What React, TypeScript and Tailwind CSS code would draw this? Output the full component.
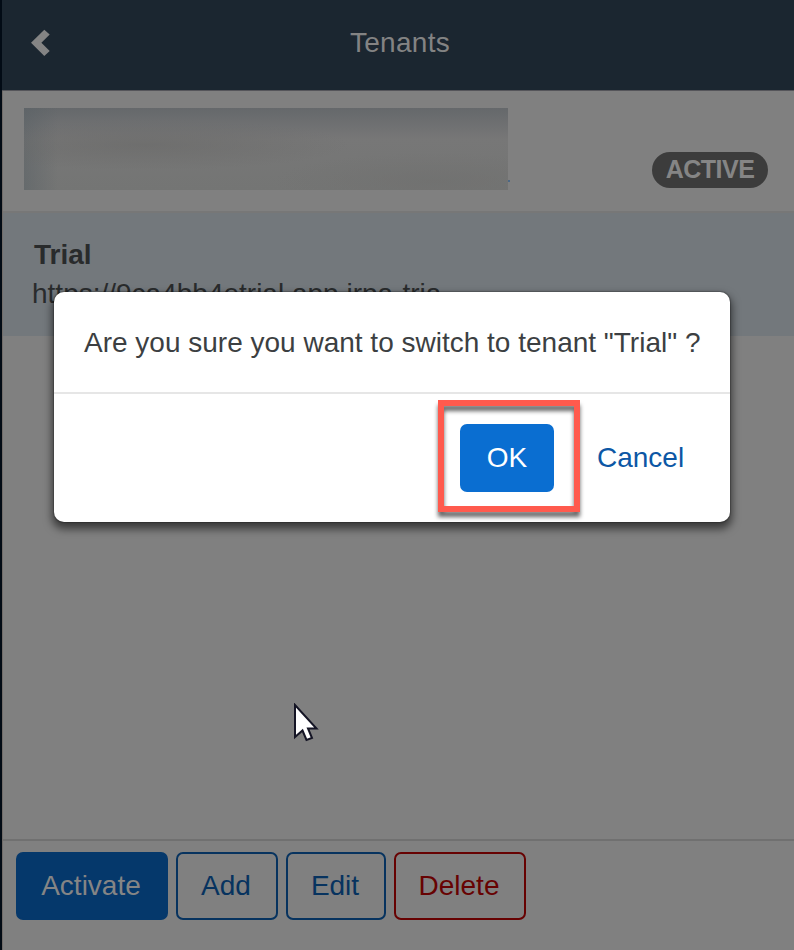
import type { ReactNode } from "react";

function ChevronLeft() {
  return (
    <svg className="ml-[28px] h-[28px] w-[22px]" viewBox="0 0 22 28">
      <path d="M14.3 0.8 L19.7 5.6 L11.4 13.8 L19.7 22 L14.3 27 L1 13.8 Z" fill="#848484" />
    </svg>
  );
}

function FooterButton({ className, children }: { className: string; children: ReactNode }) {
  return (
    <button
      className={`flex h-[68px] items-center justify-center rounded-[7px] border-2 pr-[2px] text-[28px] leading-8 ${className}`}
    >
      {children}
    </button>
  );
}

function ConfirmDialog() {
  return (
    <div className="absolute left-[52px] top-[292px] flex h-[230px] w-[676px] flex-col rounded-[10px] bg-white shadow-[0_0_1px_1px_rgba(0,0,0,0.2),0_5px_9px_2px_rgba(0,0,0,0.55)]">
      <div className="flex h-[102px] items-center whitespace-nowrap border-b-2 border-[#e6e6e6] pl-[30px] pt-[2px] text-[28px] leading-8 text-[#3c3f42]">
        Are you sure you want to switch to tenant "Trial" ?
      </div>
      <div className="flex justify-end pr-[46px] pt-[30px]">
        <button className="h-[68px] w-[94px] rounded-[7px] bg-[#0a6ed1] text-[28px] leading-8 text-white">OK</button>
        <button className="ml-[43px] h-[68px] w-[87px] text-[28px] leading-8 text-[#0c57a5]">Cancel</button>
      </div>
      <div className="absolute left-[384px] top-[108px] h-[112px] w-[142px] border-6 border-[#ff5a4d] drop-shadow-[0_5px_2px_rgba(0,0,0,0.6)]" />
    </div>
  );
}

export default function App() {
  return (
    <div className="relative flex h-[950px] w-[794px] flex-col overflow-hidden border-l-2 border-[#020b15] bg-[#808080] font-['Liberation_Sans',Arial,sans-serif]">
      <header className="grid h-[91px] shrink-0 grid-cols-[1fr_auto_1fr] items-center border-b border-[#55555a] bg-[#1b2630] pb-1">
        <ChevronLeft />
        <h1 className="pl-[4px] text-[28px] leading-8 tracking-[0.3px] text-[#838383]">Tenants</h1>
      </header>

      <section className="flex h-[122px] shrink-0 items-start justify-between border-b-2 border-[#777777] pl-[22px] pr-[26px] pt-[17px]">
        <div className="flex items-end">
          <div className="h-[82px] w-[484px] bg-[radial-gradient(ellipse_at_25%_45%,rgba(106,106,105,0.65),transparent_40%),radial-gradient(ellipse_at_85%_90%,rgba(112,112,111,0.7),transparent_28%),linear-gradient(to_right,rgba(88,96,101,0.5),transparent_7%),linear-gradient(to_bottom,#65686b,#777777_38%,#747574)]" />
          <span className="mb-2 h-0.5 w-0.5 bg-[#4b6785]" />
        </div>
        <span className="mt-[44px] flex h-9 w-[116px] items-center justify-center rounded-full bg-[#3c3c3c] pb-[2px] text-[25px] font-bold leading-7 tracking-[-0.5px] text-[#858585]">
          ACTIVE
        </span>
      </section>

      <section className="h-[123px] shrink-0 bg-[#73787c] text-[#292b2c]">
        <p className="pl-[32px] pt-[26px] text-[28px] font-bold leading-8">Trial</p>
        <p className="w-[438px] overflow-hidden whitespace-nowrap pl-[30px] pt-[7px] text-[28px] leading-8">
          https://9ca4bb4etrial.app.irpa-tria
        </p>
      </section>

      <main className="flex-1" />

      <footer className="flex h-[111px] shrink-0 items-start border-t-2 border-[#707070] pl-[14px] pt-[11px]">
        <FooterButton className="w-[152px] border-[#05386b] bg-[#05386b] text-[#858585]">Activate</FooterButton>
        <FooterButton className="ml-2 w-[102px] border-[#07335f] text-[#07335f]">Add</FooterButton>
        <FooterButton className="ml-2 w-[100px] border-[#07335f] text-[#07335f]">Edit</FooterButton>
        <FooterButton className="ml-2 w-[132px] border-[#670202] text-[#670202]">Delete</FooterButton>
      </footer>

      <div className="absolute left-0 top-[91px] h-[859px] w-px bg-[#716c69]" />
      <ConfirmDialog />

      <svg className="absolute left-[291px] top-[703px] h-[40px] w-[28px]" viewBox="0 0 28 40">
        <path
          d="M2 2 V34 L9.5 27.5 L13.5 37 L19 35 L15 25.5 H23.5 Z"
          fill="white"
          stroke="#151525"
          strokeWidth="2"
        />
      </svg>
    </div>
  );
}
